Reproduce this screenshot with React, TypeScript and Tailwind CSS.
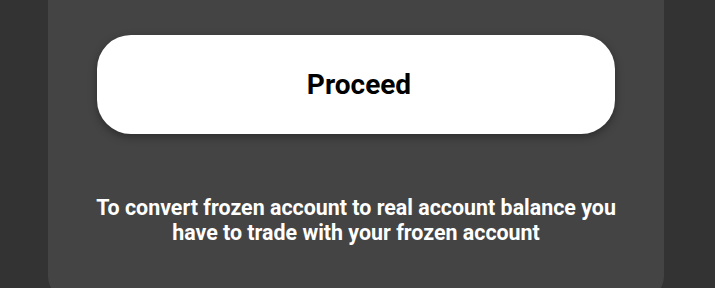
import React from "react";

export default function App() {
  return (
    <div className="w-[715px] h-[288px] overflow-hidden bg-[#333333] font-['Roboto',sans-serif]">
      <div className="ml-[48px] w-[616px] h-[300px] bg-[#444444] rounded-b-[24px] pt-[35px] px-[49px]">
        <button className="w-full h-[99px] pl-[6px] bg-white rounded-[34px] shadow-[0_3px_8px_rgba(0,0,0,0.35)] text-black text-[28px] font-bold">
          Proceed
        </button>
        <p className="-mx-[40px] mt-[61px] whitespace-nowrap text-white text-[21.4px] leading-[25px] font-bold text-center">
          To convert frozen account to real account balance you
          <br />
          have to trade with your frozen account
        </p>
      </div>
    </div>
  );
}
